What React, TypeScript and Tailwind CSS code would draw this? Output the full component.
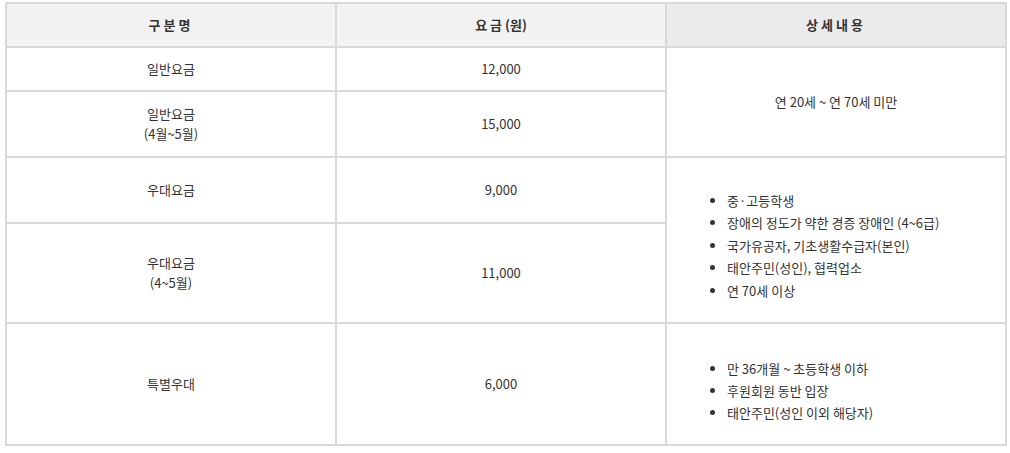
const font = { fontFamily: '"Noto Sans CJK KR", "Noto Sans", sans-serif' };

const cell = "border-2 border-[#d9d9d9] text-center align-middle";

export default function App() {
  return (
    <div className="bg-white w-[1010px] h-[453px] pt-[2px] pl-[5px]" style={font}>
      <table className="w-[1000px] table-fixed border-collapse text-[13px] text-[#333] leading-[20px]">
        <colgroup>
          <col className="w-[330px]" />
          <col className="w-[330px]" />
          <col className="w-[340px]" />
        </colgroup>
        <thead>
          <tr className="h-[44px]">
            <th className={`${cell} bg-[#f2f2f2] font-bold tracking-[3px]`}>구분명</th>
            <th className={`${cell} bg-[#f2f2f2] font-bold`}>
              <span className="tracking-[3px]">요금</span>(원)
            </th>
            <th className={`${cell} bg-[#ebebeb] font-bold tracking-[3px]`}>상세내용</th>
          </tr>
        </thead>
        <tbody>
          <tr className="h-[44px]">
            <td className={cell}>일반요금</td>
            <td className={cell}>12,000</td>
            <td className={cell} rowSpan={2}>
              연 20세 ~ 연 70세 미만
            </td>
          </tr>
          <tr className="h-[66px]">
            <td className={cell}>
              일반요금
              <br />
              (4월~5월)
            </td>
            <td className={cell}>15,000</td>
          </tr>
          <tr className="h-[66px]">
            <td className={cell}>우대요금</td>
            <td className={cell}>9,000</td>
            <td className={`${cell} text-left`} rowSpan={2}>
              <ul className="list-disc pl-[60px] pt-[12px] leading-[22.5px]">
                <li>중·고등학생</li>
                <li>장애의 정도가 약한 경증 장애인 (4~6급)</li>
                <li>국가유공자, 기초생활수급자(본인)</li>
                <li>태안주민(성인), 협력업소</li>
                <li>연 70세 이상</li>
              </ul>
            </td>
          </tr>
          <tr className="h-[100px]">
            <td className={cell}>
              우대요금
              <br />
              (4~5월)
            </td>
            <td className={cell}>11,000</td>
          </tr>
          <tr className="h-[122px]">
            <td className={cell}>특별우대</td>
            <td className={cell}>6,000</td>
            <td className={`${cell} text-left`}>
              <ul className="list-disc pl-[60px] pt-[13px] leading-[22px]">
                <li>만 36개월 ~ 초등학생 이하</li>
                <li>후원회원 동반 입장</li>
                <li>태안주민(성인 이외 해당자)</li>
              </ul>
            </td>
          </tr>
        </tbody>
      </table>
    </div>
  );
}
